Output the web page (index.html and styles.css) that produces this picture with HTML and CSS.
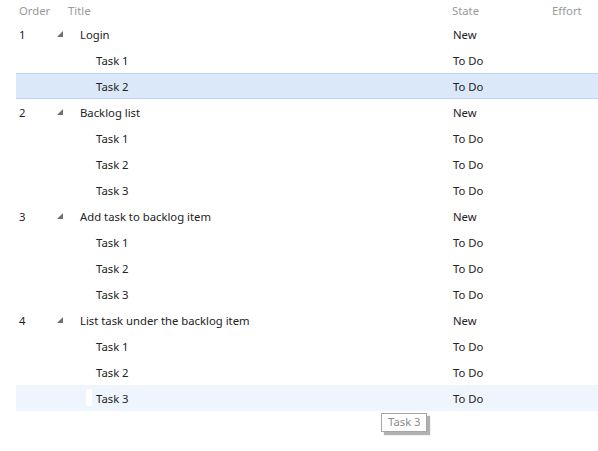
FILE: index.html
```html
<!DOCTYPE html>
<html>
<head>
<meta charset="utf-8">
<link rel="stylesheet" href="styles.css">
</head>
<body>
<div class="grid">
  <div class="row head">
    <div class="c-order span2">Order</div>
    <div class="c-title">Title</div>
    <div class="c-state">State</div>
    <div class="c-effort">Effort</div>
  </div>

  <div class="row">
    <div class="c-order">1</div>
    <div class="c-toggle"><svg width="6" height="6" viewBox="0 0 6 6"><polygon points="6,0 6,6 0,6"/></svg></div>
    <div class="c-title parent">Login</div>
    <div class="c-state">New</div>
    <div class="c-effort"></div>
  </div>
  <div class="row">
    <div class="c-order"></div><div class="c-toggle"></div>
    <div class="c-title child">Task 1</div>
    <div class="c-state">To Do</div><div class="c-effort"></div>
  </div>
  <div class="row selected">
    <div class="c-order"></div><div class="c-toggle"></div>
    <div class="c-title child">Task 2</div>
    <div class="c-state">To Do</div><div class="c-effort"></div>
  </div>

  <div class="row">
    <div class="c-order">2</div>
    <div class="c-toggle"><svg width="6" height="6" viewBox="0 0 6 6"><polygon points="6,0 6,6 0,6"/></svg></div>
    <div class="c-title parent">Backlog list</div>
    <div class="c-state">New</div>
    <div class="c-effort"></div>
  </div>
  <div class="row">
    <div class="c-order"></div><div class="c-toggle"></div>
    <div class="c-title child">Task 1</div>
    <div class="c-state">To Do</div><div class="c-effort"></div>
  </div>
  <div class="row">
    <div class="c-order"></div><div class="c-toggle"></div>
    <div class="c-title child">Task 2</div>
    <div class="c-state">To Do</div><div class="c-effort"></div>
  </div>
  <div class="row">
    <div class="c-order"></div><div class="c-toggle"></div>
    <div class="c-title child">Task 3</div>
    <div class="c-state">To Do</div><div class="c-effort"></div>
  </div>

  <div class="row">
    <div class="c-order">3</div>
    <div class="c-toggle"><svg width="6" height="6" viewBox="0 0 6 6"><polygon points="6,0 6,6 0,6"/></svg></div>
    <div class="c-title parent">Add task to backlog item</div>
    <div class="c-state">New</div>
    <div class="c-effort"></div>
  </div>
  <div class="row">
    <div class="c-order"></div><div class="c-toggle"></div>
    <div class="c-title child">Task 1</div>
    <div class="c-state">To Do</div><div class="c-effort"></div>
  </div>
  <div class="row">
    <div class="c-order"></div><div class="c-toggle"></div>
    <div class="c-title child">Task 2</div>
    <div class="c-state">To Do</div><div class="c-effort"></div>
  </div>
  <div class="row">
    <div class="c-order"></div><div class="c-toggle"></div>
    <div class="c-title child">Task 3</div>
    <div class="c-state">To Do</div><div class="c-effort"></div>
  </div>

  <div class="row">
    <div class="c-order">4</div>
    <div class="c-toggle"><svg width="6" height="6" viewBox="0 0 6 6"><polygon points="6,0 6,6 0,6"/></svg></div>
    <div class="c-title parent">List task under the backlog item</div>
    <div class="c-state">New</div>
    <div class="c-effort"></div>
  </div>
  <div class="row">
    <div class="c-order"></div><div class="c-toggle"></div>
    <div class="c-title child">Task 1</div>
    <div class="c-state">To Do</div><div class="c-effort"></div>
  </div>
  <div class="row">
    <div class="c-order"></div><div class="c-toggle"></div>
    <div class="c-title child">Task 2</div>
    <div class="c-state">To Do</div><div class="c-effort"></div>
  </div>
  <div class="row hover">
    <div class="c-order"></div><div class="c-toggle"></div>
    <div class="c-title child"><span class="grip"></span>Task 3</div>
    <div class="c-state">To Do</div><div class="c-effort"></div>
    <div class="tooltip">Task 3</div>
  </div>
</div>
</body>
</html>
```

FILE: styles.css
```css
html, body {
  margin: 0;
  padding: 0;
  background: #ffffff;
}
body {
  font-family: "Noto Sans", "Open Sans", "DejaVu Sans", sans-serif;
  font-size: 11.3px;
  color: #222222;
  width: 598px;
  height: 451px;
  overflow: hidden;
}
.grid {
  padding-left: 16px;
}
.row {
  position: relative;
  display: grid;
  grid-template-columns: 36px 16px 384px 100px 1fr;
  height: 26px;
  line-height: 24px;
  padding-top: 2px;
  box-sizing: border-box;
  white-space: nowrap;
}
.row.head {
  height: 21px;
  line-height: 22px;
  padding-top: 0;
  color: #9a9a9a;
}
.span2 {
  grid-column: span 2;
}
.c-order {
  padding-left: 3px;
}
.c-toggle {
  display: flex;
  align-items: center;
  padding-left: 5px;
  margin-top: -2px;
}
.c-toggle svg {
  fill: #707070;
  display: block;
}
.c-title.parent {
  padding-left: 12px;
}
.c-title.child {
  padding-left: 28px;
  position: relative;
}
.c-state {
  padding-left: 1px;
}
.row.head .c-state {
  padding-left: 0;
}
.row.selected {
  background: #dae8f9;
  border-top: 1px solid #b8d5f5;
  border-bottom: 1px solid #b8d5f5;
  padding-top: 1px;
  line-height: 24px;
}
.row.hover {
  background: #eff5fd;
}
.grip {
  position: absolute;
  left: 18px;
  top: 2px;
  width: 6px;
  height: 17px;
  background: #ffffff;
}
.tooltip {
  position: absolute;
  left: 365px;
  top: 28px;
  height: 17px;
  line-height: 16px;
  padding: 0 5px 0 6px;
  border: 1px solid #a6a6a6;
  background: #ffffff;
  color: #8c8c8c;
  box-shadow: 3px 3px 1px #b0b0b0;
}
```
